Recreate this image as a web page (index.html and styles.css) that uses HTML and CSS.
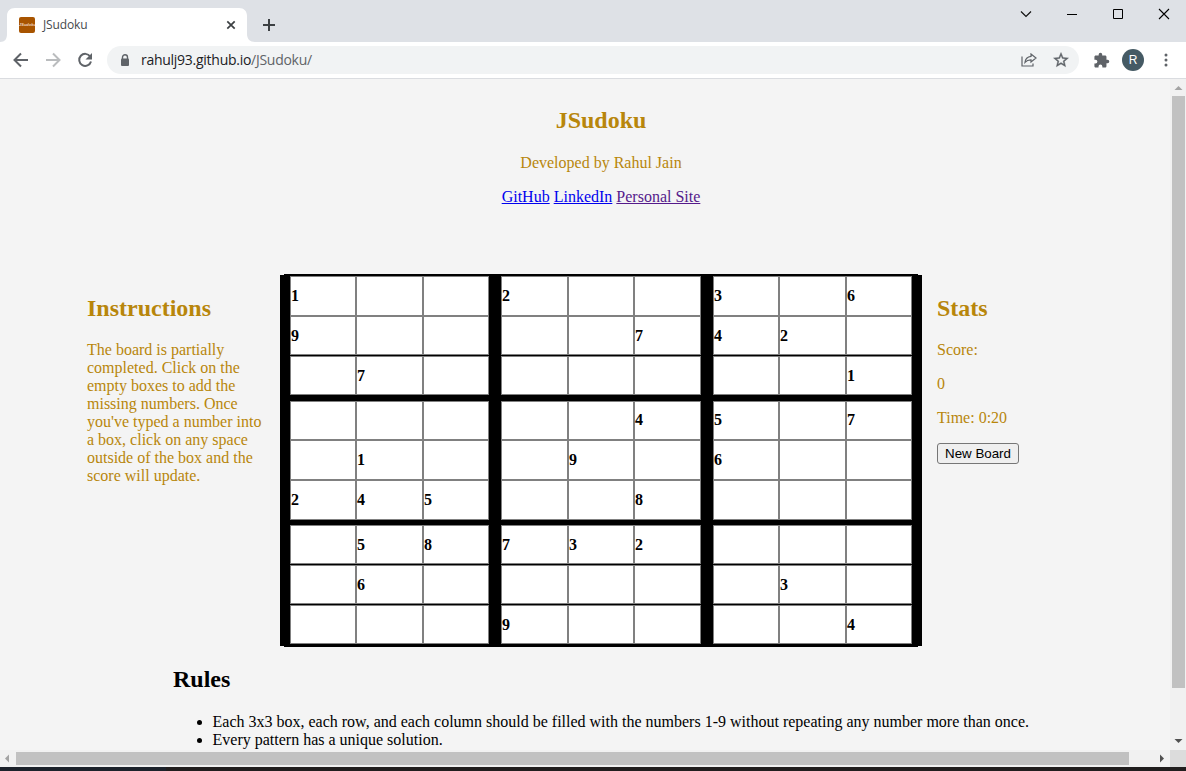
FILE: index.html
```html
<!DOCTYPE html>
<html lang="en">
<head>
<meta charset="utf-8">
<title>JSudoku</title>
<link rel="stylesheet" href="styles.css">
</head>
<body>
<div class="tabstrip">
  <svg class="tab-shape" width="256" height="34" viewBox="0 0 256 34"><path fill="#fff" d="M0 34c5 0 7-3 7-8V8c0-5 3-8 8-8h224c5 0 8 3 8 8v18c0 5 3 8 8 8z"/></svg>
  <div class="tab">
    <span class="favicon">JSudoku</span>
    <span class="tab-title">JSudoku</span>
    <svg class="tab-close" width="10" height="10" viewBox="0 0 10 10"><path d="M1.300 1.300l7.400 7.400M8.700 1.300L1.300 8.700" stroke="#3c4043" stroke-width="1.700"/></svg>
  </div>
  <svg class="new-tab" width="12" height="12" viewBox="0 0 12 12"><path d="M6 0v12M0 6h12" stroke="#3c4043" stroke-width="2"/></svg>
  <div class="window-buttons">
    <svg width="12" height="12" viewBox="0 0 12 12"><path d="M1 3.500l5 5 5-5" fill="none" stroke="#111" stroke-width="1.200"/></svg>
    <svg width="12" height="12" viewBox="0 0 12 12"><path d="M1 6.500h10" stroke="#000"/></svg>
    <svg width="12" height="12" viewBox="0 0 12 12"><path d="M1.500 1.500h9v9h-9z" fill="none" stroke="#000"/></svg>
    <svg width="12" height="12" viewBox="0 0 12 12"><path d="M1 1l10 10M11 1L1 11" stroke="#000" stroke-width="1.100"/></svg>
  </div>
</div>
<div class="toolbar">
  <svg class="nav" width="16" height="16" viewBox="0 0 16 16"><path d="M15 8H2M8 1.500L1.500 8 8 14.500" fill="none" stroke="#5f6368" stroke-width="2"/></svg>
  <svg class="nav" width="16" height="16" viewBox="0 0 16 16"><path d="M1 8h13M8 1.500L14.500 8 8 14.500" fill="none" stroke="#babcbe" stroke-width="2"/></svg>
  <svg class="nav" width="16" height="16" viewBox="0 0 16 16"><path d="M13.200 4.500A6 6 0 1 0 14 9.500" fill="none" stroke="#5f6368" stroke-width="2"/><path d="M15 1v6.500H8.500z" fill="#5f6368"/></svg>
  <div class="address">
    <svg class="lock" width="10" height="13" viewBox="0 0 10 13"><path d="M2.500 5V3.300a2.500 2.500 0 0 1 5 0V5" fill="none" stroke="#5f6368" stroke-width="1.400"/><rect x="1" y="4.500" width="8" height="7.500" rx="1" fill="#5f6368"/></svg>
    <span class="url">rahulj93.github.io<span class="path">/JSudoku/</span></span>
    <svg class="share" width="16" height="14" viewBox="0 0 16 14"><path d="M1 3.500v9.500h11V10.500" fill="none" stroke="#5f6368" stroke-width="1.200"/><path d="M10 1L15 5 10 9V6.800C7.500 6.800 5.400 7.600 4 9.300c.3-3.200 2.500-5.400 6-5.900z" fill="none" stroke="#5f6368" stroke-width="1.200"/></svg>
    <svg class="star" width="18" height="18" viewBox="0 0 24 24"><path fill="#5f6368" stroke="#5f6368" stroke-width=".5" d="M22 9.240l-7.190-.62L12 2 9.190 8.630 2 9.240l5.460 4.730L5.820 21 12 17.270 18.180 21l-1.630-7.030L22 9.240zM12 15.400l-3.760 2.270 1-4.280-3.320-2.880 4.380-.38L12 6.100l1.710 4.040 4.380.38-3.320 2.880 1 4.280L12 15.400z"/></svg>
  </div>
  <svg class="puzzle" width="17" height="17" viewBox="0 0 24 24"><path fill="#5f6368" d="M20.500 11H19V7c0-1.100-.9-2-2-2h-4V3.500a2.500 2.500 0 0 0-5 0V5H4c-1.100 0-2 .9-2 2v3.800h1.500a2.700 2.700 0 0 1 0 5.400H2V20c0 1.100.9 2 2 2h3.800v-1.500a2.700 2.700 0 0 1 5.400 0V22H17c1.100 0 2-.9 2-2v-4h1.500a2.500 2.500 0 0 0 0-5z"/></svg>
  <div class="avatar">R</div>
  <svg class="dots" width="4" height="14" viewBox="0 0 4 14"><g fill="#5f6368"><circle cx="2" cy="2" r="1.500"/><circle cx="2" cy="7" r="1.500"/><circle cx="2" cy="12" r="1.500"/></g></svg>
</div>
<div class="viewport">
  <main class="page">
    <header class="intro">
      <h2>JSudoku</h2>
      <p>Developed by Rahul Jain</p>
      <p><a>GitHub</a> <a>LinkedIn</a> <a class="visited">Personal Site</a></p>
    </header>
    <div class="game">
      <section class="instructions">
        <h2>Instructions</h2>
        <p>The board is partially completed. Click on the empty boxes to add the missing numbers. Once you've typed a number into a box, click on any space outside of the box and the score will update.</p>
      </section>
      <div class="frame"><div class="board" id="board"></div></div>
      <section class="stats">
        <h2>Stats</h2>
        <p>Score:</p>
        <p>0</p>
        <p>Time: 0:20</p>
        <button>New Board</button>
      </section>
    </div>
    <section class="rules">
      <h2>Rules</h2>
      <ul>
        <li>Each 3x3 box, each row, and each column should be filled with the numbers 1-9 without repeating any number more than once.</li>
        <li>Every pattern has a unique solution.</li>
      </ul>
    </section>
  </main>
  <div class="vscroll">
    <svg width="16" height="17" viewBox="0 0 16 17"><path d="M4.500 11h8L8.500 7z" fill="#a3a3a3"/></svg>
    <div class="vthumb"></div>
    <svg class="end" width="16" height="17" viewBox="0 0 16 17"><path d="M4.500 6h8l-4 4z" fill="#505050"/></svg>
  </div>
</div>
<div class="hscroll">
  <svg width="16" height="17" viewBox="0 0 16 17"><path d="M9 4.500v8l-4-4z" fill="#a3a3a3"/></svg>
  <div class="hthumb"></div>
  <svg class="end" width="16" height="17" viewBox="0 0 16 17"><path d="M6 4.500v8l4-4z" fill="#505050"/></svg>
  <div class="corner"></div>
</div>
<div class="taskbar"></div>
<script src="board.js"></script>
</body>
</html>
```
FILE: styles.css
```css
* { box-sizing: border-box; }
body { margin: 0; height: 771px; overflow: hidden; display: flex; flex-direction: column; background: #f4f4f4; font-family: "Liberation Serif", serif; font-size: 16px; line-height: 18px; }
svg { display: block; flex: none; }
h2 { margin: 0; font-size: 24px; line-height: 28px; }
p { margin: 0; }

.tabstrip { height: 42px; flex: none; background: #dee1e6; display: flex; position: relative; font-family: "Open Sans", sans-serif; }
.tab-shape { position: absolute; left: 0; top: 8px; }
.tab { position: relative; width: 247px; height: 34px; margin-top: 8px; padding-left: 19px; display: flex; align-items: center; }
.favicon { width: 16px; height: 16px; border-radius: 2px; background: #a85400; color: #f0d8c0; font: italic bold 4px/15px "Liberation Sans", sans-serif; text-align: center; overflow: hidden; }
.tab-title { margin-left: 8px; font-size: 12px; letter-spacing: -0.15px; color: #45494d; }
.tab-close { margin-left: auto; margin-right: 11px; }
.new-tab { margin: 19px 0 0 16px; }
.window-buttons { margin: 8px 16px 0 auto; display: flex; gap: 34px; }

.toolbar { height: 37px; flex: none; background: #fff; border-bottom: 1px solid #dadce0; display: flex; align-items: center; padding-left: 13px; }
.nav { margin-right: 16px; }
.address { width: 972px; height: 28px; margin-left: -2px; border-radius: 14px; background: #f1f3f4; display: flex; align-items: center; padding: 0 9px 0 13px; font-family: "Open Sans", sans-serif; }
.url { margin-left: 11px; font-size: 14px; letter-spacing: -0.27px; color: #202124; }
.path { color: #5f6368; }
.share { margin-left: auto; margin-right: 15px; }
.puzzle { margin-left: 14px; }
.avatar { width: 22px; height: 22px; margin-left: 12px; border-radius: 50%; background: #455a64; color: #fff; font: 12px/22px "Liberation Sans", sans-serif; text-align: center; }
.dots { margin-left: 20px; }

.viewport { height: 671px; flex: none; display: flex; }
.page { width: 1170px; overflow: hidden; }
.intro { width: 1202px; padding-top: 27px; text-align: center; color: #b8860b; }
.intro p { margin-top: 16px; }
.intro h2 + p { margin-top: 20px; }
.intro a { color: #0000ee; text-decoration: underline; }
.intro a.visited { color: #551a8b; }

.game { display: flex; margin-top: 68px; padding-left: 87px; height: 373px; color: #b8860b; }
.instructions { width: 193px; padding-top: 20px; }
.instructions p { width: 178px; margin-top: 19px; }
.frame { width: 642px; height: 373px; display: flex; align-items: center; justify-content: center; background: linear-gradient(#000, #000) 0 1px / 642px 371px no-repeat, linear-gradient(#000, #000) 4px 0 / 634px 373px no-repeat; }
.board { width: 622px; height: 369px; display: grid; grid-template-columns: 66px 67px 66px 12px 67px 66px 67px 12px 66px 67px 66px; color: #000; }
.board { grid-template-rows: 40px 39px 1px 39px 6px 39px 40px 40px 5px 39px 1px 39px 1px 39px; }
.cell { background: #fff; border: 1px solid #808080; font-weight: bold; line-height: 37px; white-space: nowrap; }
.cell.raised { line-height: 35px; }
.stats { padding: 20px 0 0 15px; }
.stats p { margin-top: 16px; }
.stats h2 + p { margin-top: 19px; }
.stats button { display: block; width: 82px; height: 21px; margin-top: 16px; padding: 0; border: 1px solid #767676; border-radius: 3px; background: #efefef; color: #000; font: 13.333px/19px "Liberation Sans", sans-serif; }

.rules { padding: 18px 0 0 173px; }
.rules ul { margin: 20px 0 0; padding-left: 39.5px; white-space: nowrap; }

.vscroll { width: 16px; background: #f1f1f1; display: flex; flex-direction: column; }
.vthumb { width: 13px; height: 592px; margin-left: 2px; background: #c1c1c1; }
.vscroll .end { margin-top: auto; }
.hscroll { height: 17px; flex: none; background: #f1f1f1; display: flex; align-items: center; }
.hthumb { width: 1113px; height: 13px; background: #c1c1c1; }
.hscroll .end { margin-left: auto; }
.corner { width: 16px; height: 17px; background: #dcdcdc; }
.taskbar { height: 4px; flex: none; background: linear-gradient(90deg, #1c222b 166px, #211e1e 166px); }
```
FILE: board.js
```js
const rows = [
  "1..2..3.6",
  "9....742.",
  ".7......1",
  ".....45.7",
  ".1..9.6..",
  "245..8...",
  ".58732...",
  ".6.....3.",
  "...9....4"
];
// Grid lines leave room for the black dividers between cells.
const cols = [1, 2, 3, 5, 6, 7, 9, 10, 11];
const lines = [1, 2, 4, 6, 7, 8, 10, 12, 14];
const board = document.getElementById("board");
rows.forEach((row, r) => [...row].forEach((ch, c) => {
  const cell = document.createElement("div");
  cell.className = r === 3 ? "cell raised" : "cell";
  cell.style.gridArea = `${lines[r]} / ${cols[c]}`;
  cell.textContent = ch === "." ? "" : ch;
  board.append(cell);
}));
```
